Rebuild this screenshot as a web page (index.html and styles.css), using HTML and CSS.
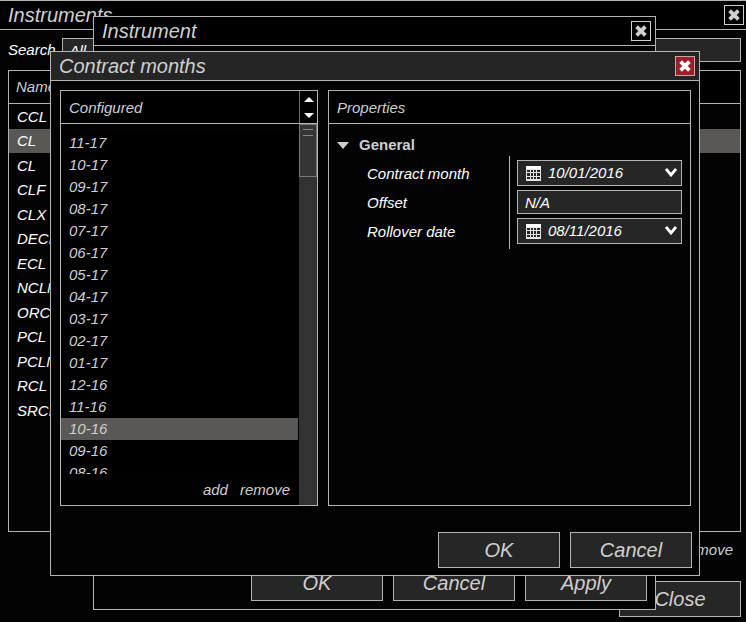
FILE: index.html
```html
<!DOCTYPE html>
<html lang="en">
<head>
<meta charset="utf-8">
<title>Instruments</title>
<link rel="stylesheet" href="styles.css">
</head>
<body>
<svg class="defs" aria-hidden="true">
  <symbol id="cross" viewBox="0 0 18 18"><path d="M4.6 4.6 13.4 13.4M13.4 4.6 4.6 13.4" stroke="currentColor" stroke-width="3.8" fill="none"/></symbol>
  <symbol id="calendar" viewBox="0 0 15 15"><path fill="#e4e4e4" fill-rule="evenodd" d="M0 0h15v15H0zM1 4v2h3v-2zM5 4v2h2v-2zM8 4v2h2v-2zM11 4v2h3v-2zM1 7v3h3v-3zM5 7v3h2v-3zM8 7v3h2v-3zM11 7v3h3v-3zM1 11v2h3v-2zM5 11v2h2v-2zM8 11v2h2v-2zM11 11v2h3v-2z"/><path fill="#fff" d="M0 0h15v3H0z"/></symbol>
  <symbol id="chevron" viewBox="0 0 12 9"><path d="M1 1 6 7 11 1" stroke="#fff" stroke-width="2.8" fill="none"/></symbol>
</svg>

<main class="window window-main">
  <header class="titlebar">
    <h1>Instruments</h1>
    <button class="close" aria-label="Close instruments"><svg><use href="#cross"/></svg></button>
  </header>
  <div class="main-body">
    <div class="search">
      <label for="search">Search</label>
      <input id="search" class="field" value="All">
    </div>
    <div class="panel instruments">
      <table>
        <thead><tr><th>Name</th></tr></thead>
        <tbody>
          <tr><td>CCL</td></tr>
          <tr class="selected"><td>CL</td></tr>
          <tr><td>CL</td></tr>
          <tr><td>CLF</td></tr>
          <tr><td>CLX</td></tr>
          <tr><td>DECL</td></tr>
          <tr><td>ECL</td></tr>
          <tr><td>NCLN</td></tr>
          <tr><td>ORCL</td></tr>
          <tr><td>PCL</td></tr>
          <tr><td>PCLN</td></tr>
          <tr><td>RCL</td></tr>
          <tr><td>SRCL</td></tr>
        </tbody>
      </table>
    </div>
    <div class="links main-links"><button class="link">remove</button></div>
    <div class="actions"><button class="action">Close</button></div>
  </div>
</main>

<section class="window window-instrument">
  <header class="titlebar">
    <h2>Instrument</h2>
    <button class="close" aria-label="Close instrument"><svg><use href="#cross"/></svg></button>
  </header>
  <div class="actions">
    <button class="action wide">OK</button>
    <button class="action">Cancel</button>
    <button class="action">Apply</button>
  </div>
</section>

<section class="window window-months">
  <header class="titlebar active">
    <h2>Contract months</h2>
    <button class="close danger" aria-label="Close contract months"><svg><use href="#cross"/></svg></button>
  </header>
  <div class="columns">
    <section class="panel configured">
      <div class="panel-head">
        <h3>Configured</h3>
        <div class="sorter">
          <button class="sort" aria-label="Move up"><svg viewBox="0 0 10 5"><path d="M0 5 5 0 10 5z"/></svg></button>
          <button class="sort" aria-label="Move down"><svg viewBox="0 0 10 5"><path d="M0 0h10L5 5z"/></svg></button>
        </div>
      </div>
      <div class="list-area">
        <div class="list-column">
          <ul class="months" role="listbox" aria-label="Configured">
            <li role="option">11-17</li>
            <li role="option">10-17</li>
            <li role="option">09-17</li>
            <li role="option">08-17</li>
            <li role="option">07-17</li>
            <li role="option">06-17</li>
            <li role="option">05-17</li>
            <li role="option">04-17</li>
            <li role="option">03-17</li>
            <li role="option">02-17</li>
            <li role="option">01-17</li>
            <li role="option">12-16</li>
            <li role="option">11-16</li>
            <li role="option" aria-selected="true" class="selected">10-16</li>
            <li role="option">09-16</li>
            <li role="option">08-16</li>
          </ul>
          <div class="links"><button class="link">add</button><button class="link">remove</button></div>
        </div>
        <div class="scrollbar"><div class="thumb"></div></div>
      </div>
    </section>
    <section class="panel properties">
      <div class="panel-head"><h3>Properties</h3></div>
      <button class="group"><svg viewBox="0 0 12 7"><path d="M0 0h12L6 7z"/></svg>General</button>
      <div class="form">
        <div class="labels">
          <label for="month">Contract month</label>
          <label for="offset">Offset</label>
          <label for="rollover">Rollover date</label>
        </div>
        <div class="fields">
          <div class="date">
            <select id="month" class="field"><option>10/01/2016</option></select>
            <svg class="calendar"><use href="#calendar"/></svg>
            <svg class="chevron"><use href="#chevron"/></svg>
          </div>
          <input id="offset" class="field" value="N/A">
          <div class="date">
            <select id="rollover" class="field"><option>08/11/2016</option></select>
            <svg class="calendar"><use href="#calendar"/></svg>
            <svg class="chevron"><use href="#chevron"/></svg>
          </div>
        </div>
      </div>
    </section>
  </div>
  <div class="actions">
    <button class="action">OK</button>
    <button class="action">Cancel</button>
  </div>
</section>
</body>
</html>
```

FILE: styles.css
```css
:root {
  --line: #b4b4b4;
  --text: #cfcfcf;
  --fill: #262626;
  --selected: #5a5854;
}

* { box-sizing: border-box; }

body {
  margin: 0;
  background: #030303;
  color: var(--text);
  font: italic 15px/22px "Liberation Sans", Arial, sans-serif;
}

button, input, select {
  margin: 0;
  padding: 0;
  border: 0;
  background: none;
  color: inherit;
  font: inherit;
}

h1, h2, h3, ul { margin: 0; padding: 0; font-weight: normal; }
svg { display: block; }
.defs { display: none; }

.window {
  display: flex;
  flex-direction: column;
  background: #030303;
  border: 1px solid var(--line);
}

.window-main {
  height: 100vh;
  min-height: 480px;
  border-width: 1px 0 0;
}

.window-instrument {
  position: absolute;
  inset: 16px 90px 12px 93px;
  justify-content: space-between;
}

.window-months {
  position: absolute;
  top: 51px;
  left: 50px;
  right: 46px;
}

.titlebar {
  display: flex;
  align-items: center;
  justify-content: space-between;
  height: 29px;
  padding: 0 4px 0 8px;
  background: #000;
  border-bottom: 1px solid var(--line);
}

.window-main .titlebar { padding-right: 2px; }
.titlebar.active { background: #252525; }
.titlebar h1, .titlebar h2 { font-size: 20px; }

.close {
  width: 20px;
  height: 20px;
  border: 1px solid var(--text);
}

.close svg { width: 18px; height: 18px; }
.close.danger { background: #a01c28; border-color: #c4a8a4; color: #fff; }

.panel { border: 1px solid var(--line); }

.main-body {
  display: flex;
  flex: 1;
  flex-direction: column;
  padding: 8px 5px 5px 8px;
  min-height: 0;
}

.search { display: flex; align-items: center; gap: 6px; color: #fff; }
.search .field { flex: 1; }

.field {
  display: block;
  width: 100%;
  height: 24px;
  padding: 0 7px;
  background: var(--fill);
  border: 1px solid var(--line);
  border-radius: 0;
  color: #fff;
  appearance: none;
}

.instruments { flex: 1; margin-top: 8px; overflow: hidden; }
.instruments table { width: 100%; border-spacing: 0; }

.instruments th {
  height: 33px;
  padding: 0 7px;
  background: #000;
  border-bottom: 1px solid var(--line);
  font-weight: normal;
  text-align: left;
}

.instruments td { height: 24px; padding: 0 8px; color: #fff; }
.instruments tr:nth-child(odd) td { height: 25px; }
.selected { background: var(--selected); }

.links {
  display: flex;
  align-items: center;
  justify-content: flex-end;
  gap: 12px;
  height: 31px;
  padding: 0 8px;
}

.main-links { margin: 2px 0 16px; }

.actions {
  display: flex;
  justify-content: flex-end;
  gap: 10px;
}

.window-instrument .actions { padding: 0 8px 8px; }
.window-months .actions { padding: 0 7px 7px; }

.action {
  width: 122px;
  height: 36px;
  background: var(--fill);
  border: 1px solid var(--line);
  font-size: 20px;
}

.action.wide { width: 132px; }

.columns {
  display: grid;
  grid-template-columns: 258fr 363fr;
  gap: 10px;
  padding: 9px 8px 26px 9px;
}

.panel-head {
  display: flex;
  justify-content: space-between;
  height: 33px;
  background: #000;
  border-bottom: 1px solid var(--line);
}

.panel-head h3 { padding: 0 8px; font-size: 15px; line-height: 33px; }

.sorter {
  display: flex;
  flex-direction: column;
  align-items: center;
  justify-content: space-between;
  width: 18px;
  padding: 6px 0 5px;
  border-left: 1px solid #707070;
}

.sort { display: block; }
.sort svg { width: 10px; height: 5px; fill: #fff; }

.list-area { display: flex; }
.list-column { flex: 1; padding: 8px 1px 0 0; background: #010101; }
.months { height: 342px; overflow: hidden; list-style: none; background: #000; }
.months li { height: 22px; padding: 0 8px; }

.scrollbar { width: 18px; background: #323232; }

.thumb {
  height: 53px;
  padding: 4px 3px;
  background: #353535;
  border: 1px solid #777;
}

.thumb::before {
  display: block;
  height: 5px;
  border: solid #888;
  border-width: 1px 0;
  content: "";
}

.group {
  display: flex;
  align-items: center;
  gap: 10px;
  margin-top: 10px;
  padding-left: 8px;
  font-style: normal;
  font-weight: bold;
}

.group svg { width: 12px; height: 7px; fill: var(--text); }

.form { display: flex; color: #fff; }

.labels {
  flex: 1;
  display: flex;
  flex-direction: column;
  padding: 3px 0 3px 38px;
}

.labels label { height: 29px; line-height: 29px; }

.fields {
  display: flex;
  flex-direction: column;
  gap: 4px;
  width: 181px;
  padding: 4px 8px 4px 7px;
  border-left: 1px solid var(--line);
}

.date { position: relative; }
.date .field { height: 26px; padding: 0 24px 0 30px; }
.calendar, .chevron { position: absolute; pointer-events: none; }
.calendar { top: 6px; left: 9px; width: 15px; height: 15px; }
.chevron { top: 8px; right: 5px; width: 12px; height: 9px; }
```
